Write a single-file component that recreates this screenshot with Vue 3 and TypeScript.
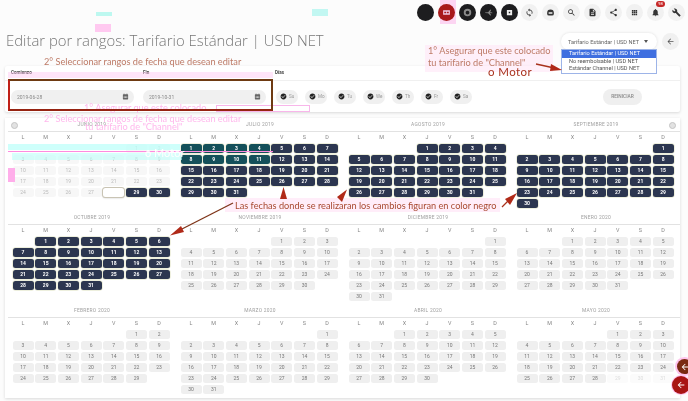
<template>
  <div class="page">
    <div class="toolbar">
      <span
        v-for="(tool, i) in tools"
        :key="i"
        class="tool"
        :class="tool.kind"
      >
        <svg v-if="tool.d" viewBox="0 0 24 24" class="tool-icon">
          <path :d="tool.d" fill-rule="evenodd" />
        </svg>
        <sup v-if="tool.badge" class="tool-badge">{{ tool.badge }}</sup>
      </span>
    </div>

    <div class="head">
      <h1 class="title">Editar por rangos: Tarifario Estándar | USD NET</h1>
      <div class="select">
        Tarifario Estándar | USD NET
        <i class="caret" />
        <ul class="select-list">
          <li class="is-active">Tarifario Estándar | USD NET</li>
          <li>No reembolsable | USD NET</li>
          <li>Estándar Channel | USD NET</li>
        </ul>
      </div>
      <span class="back">
        <svg viewBox="0 0 24 24"><path :d="icons.back" /></svg>
      </span>
    </div>

    <section class="panel">
      <div class="panel-labels">
        <span class="label">Comienzo</span>
        <span class="label">Fin</span>
        <span class="label">Días</span>
      </div>
      <div class="panel-body">
        <div v-for="date in dates" :key="date" class="date-input">
          {{ date }}
          <svg viewBox="0 0 24 24"><path :d="icons.calendar" /></svg>
        </div>
        <div class="chips">
          <span v-for="day in weekChips" :key="day" class="chip">
            <svg viewBox="0 0 24 24"><path :d="icons.check" /></svg>
            {{ day }}
          </span>
        </div>
        <button class="reset">REINICIAR</button>
      </div>
    </section>

    <section class="calendar">
      <span class="gear gear-left" />
      <span class="gear gear-right" />
      <div v-for="month in months" :key="month.name" class="month">
        <div class="month-name">{{ month.name }}</div>
        <div class="month-letters">
          <span v-for="d in weekLetters" :key="d.id" class="letter">{{ d.text }}</span>
        </div>
        <div class="month-grid">
          <span v-for="n in month.offset" :key="'b' + n" />
          <span
            v-for="day in month.days"
            :key="day.n"
            class="day"
            :class="day.cls"
          >{{ day.cls === 'is-start' ? '' : day.n }}</span>
        </div>
      </div>
    </section>

    <!-- artefactos y anotaciones pegadas sobre la captura -->
    <div class="ghost ghost-icon-hl" />
    <div class="ghost ghost-note-a" />
    <div class="ghost ghost-note-b" />
    <div class="ghost ghost-band-a" />
    <div class="ghost ghost-band-b" />
    <div class="ghost ghost-line" />
    <div class="ghost ghost-panel" />
    <div class="ghost ghost-box" />
    <div class="ghost ghost-mark-a" />
    <div class="ghost ghost-mark-b" />
    <div class="ghost ghost-mark-c" />
    <div class="ghost ghost-edge" />
    <span class="ghost-text gt-a">1° Asegurar que este colocado</span>
    <span class="ghost-text gt-b">2° Seleccionar rangos de fecha que desean editar</span>
    <span class="ghost-text gt-c">tu tarifario de "Channel"</span>
    <span class="ghost-text gt-d">o Motor</span>

    <div class="range-box" />
    <span class="note note-range">2° Seleccionar rangos de fecha que desean editar</span>
    <span class="note note-rate">1° Asegurar que este colocado<br />tu tarifario de "Channel"</span>
    <span class="note note-motor">o Motor</span>
    <span class="note note-dates">Las fechas donde se realizaran los cambios figuran en color negro</span>

    <svg class="arrows" viewBox="0 0 688 401">
      <g stroke="#a8321c" stroke-width="1.3" fill="#b02a18">
        <line x1="536" y1="64" x2="552" y2="67.5" />
        <polygon points="562,70 551,64 550,71" stroke="none" />
        <line x1="284" y1="199" x2="284" y2="193" />
        <polygon points="283.5,187 280,199 287,199" stroke="none" />
        <polygon points="347,189.5 337,197 342,202" stroke="none" />
        <line x1="502" y1="207" x2="508" y2="201" />
        <polygon points="517,193 505,199 510,205" stroke="none" />
        <line x1="233" y1="203" x2="180" y2="230" stroke="#7e3418" />
        <polygon points="170,235.5 181,226 184,232" stroke="none" />
      </g>
    </svg>

    <span class="fab fab-top"><svg viewBox="0 0 24 24"><path :d="icons.back" /></svg></span>
    <span class="fab fab-bottom"><svg viewBox="0 0 24 24"><path :d="icons.back" /></svg></span>
  </div>
</template>

<script setup lang="ts">
interface Tool {
  kind: string;
  d?: string;
  badge?: string;
}

const icons = {
  back: 'M20 11H7.83l5.59-5.59L12 4l-8 8 8 8 1.41-1.41L7.83 13H20v-2z',
  calendar:
    'M5 4h14a2 2 0 0 1 2 2v14a2 2 0 0 1-2 2H5a2 2 0 0 1-2-2V6a2 2 0 0 1 2-2zM6 2h2v3H6zM16 2h2v3h-2zM6 10v2h3v-2zM10.5 10v2h3v-2zM15 10v2h3v-2zM6 14v2h3v-2zM10.5 14v2h3v-2zM15 14v2h3v-2z',
  check:
    'M12 2C6.48 2 2 6.48 2 12s4.48 10 10 10 10-4.48 10-10S17.52 2 12 2zm-2 15l-5-5 1.41-1.41L10 14.17l7.59-7.59L19 8l-9 9z',
};

const tools: Tool[] = [
  { kind: 'dark' },
  { kind: 'dark red', d: 'M3 6h18v12H3zM6 10v4h5v-4zM13 10v4h5v-4z' },
  { kind: 'dark soft', d: 'M12 2a10 10 0 1 0 0 20 10 10 0 0 0 0-20zM12 7a5 5 0 1 1 0 10 5 5 0 0 1 0-10z' },
  { kind: 'dark soft', d: 'M3 12l8-1 6-7 2 1-3 6 6 1v2l-6-1 3 6-2 1-6-6-8-1z' },
  { kind: 'dark', d: 'M5 5h14v14H5zM10 10v4h4v-4z' },
  {
    kind: 'light',
    d: 'M12 4V1L8 5l4 4V6c3.31 0 6 2.69 6 6 0 1.01-.25 1.97-.7 2.8l1.46 1.46C19.54 15.03 20 13.57 20 12c0-4.42-3.58-8-8-8zm0 14c-3.31 0-6-2.69-6-6 0-1.01.25-1.97.7-2.8L5.24 7.74C4.46 8.97 4 10.43 4 12c0 4.42 3.58 8 8 8v3l4-4-4-4v3z',
  },
  { kind: 'light', d: 'M3 13a9 9 0 0 1 18 0v2a5 5 0 0 1-5 5H8a5 5 0 0 1-5-5zM7 11v4h10v-4z' },
  {
    kind: 'light',
    d: 'M15.5 14h-.79l-.28-.27C15.41 12.59 16 11.11 16 9.5 16 5.91 13.09 3 9.5 3S3 5.91 3 9.5 5.91 16 9.5 16c1.61 0 3.09-.59 4.23-1.57l.27.28v.79l5 4.99L20.49 19l-4.99-5zm-6 0C7.01 14 5 11.99 5 9.5S7.01 5 9.5 5 14 7.01 14 9.5 11.99 14 9.5 14z',
  },
  {
    kind: 'light',
    d: 'M14 2H6c-1.1 0-2 .9-2 2v16c0 1.1.9 2 2 2h12c1.1 0 2-.9 2-2V8l-6-6zm2 16H8v-2h8v2zm0-4H8v-2h8v2zm-3-5V3.5L18.5 9H13z',
  },
  {
    kind: 'light',
    d: 'M18 16.08c-.76 0-1.44.3-1.96.77L8.91 12.7c.05-.23.09-.46.09-.7s-.04-.47-.09-.7l7.05-4.11c.54.5 1.25.81 2.04.81 1.66 0 3-1.34 3-3s-1.34-3-3-3-3 1.34-3 3c0 .24.04.47.09.7L8.04 9.81C7.5 9.31 6.79 9 6 9c-1.66 0-3 1.34-3 3s1.34 3 3 3c.79 0 1.5-.31 2.04-.81l7.12 4.16c-.05.21-.08.43-.08.65 0 1.61 1.31 2.92 2.92 2.92s2.92-1.31 2.92-2.92-1.31-2.92-2.92-2.92z',
  },
  { kind: 'light', d: 'M5 5h4v4H5zM5 10h4v4H5zM5 15h4v4H5zM10 5h4v4h-4zM10 10h4v4h-4zM10 15h4v4h-4zM15 5h4v4h-4zM15 10h4v4h-4zM15 15h4v4h-4z' },
  {
    kind: 'light',
    badge: '98',
    d: 'M12 22c1.1 0 2-.9 2-2h-4c0 1.1.9 2 2 2zm6-6v-5c0-3.07-1.63-5.64-4.5-6.32V4c0-.83-.67-1.5-1.5-1.5s-1.5.67-1.5 1.5v.68C7.64 5.36 6 7.92 6 11v5l-2 2v1h16v-1l-2-2z',
  },
  {
    kind: 'light',
    d: 'M22.7 19l-9.1-9.1c.9-2.3.4-5-1.5-6.9-2-2-5-2.4-7.4-1.3L9 6 6 9 1.6 4.7C.4 7.1.9 10.1 2.9 12.1c1.9 1.9 4.6 2.4 6.9 1.5l9.1 9.1c.4.4 1 .4 1.4 0l2.3-2.3c.5-.4.5-1.1.1-1.4z',
  },
];

const dates = ['2019-06-28', '2019-10-31'];
const weekChips = ['Su', 'Mo', 'Tu', 'We', 'Th', 'Fr', 'Sa'];
const weekLetters = ['L', 'M', 'X', 'J', 'V', 'S', 'D'].map((text, id) => ({ id, text }));

const names = [
  'ENERO', 'FEBRERO', 'MARZO', 'ABRIL', 'MAYO', 'JUNIO',
  'JULIO', 'AGOSTO', 'SEPTIEMBRE', 'OCTUBRE', 'NOVIEMBRE', 'DICIEMBRE',
];

const rangeStart = new Date(2019, 5, 28).getTime();
const rangeEnd = new Date(2019, 9, 31).getTime();
const lastOpen = new Date(2020, 4, 28).getTime();

function dayClass(y: number, m: number, n: number): string {
  const t = new Date(y, m, n).getTime();
  if (t === rangeStart) return 'is-start';
  if (t < rangeStart) return 'is-past';
  if (t <= rangeEnd) {
    return y === 2019 && m === 6 && (n <= 4 || (n >= 8 && n <= 11)) ? 'is-on is-tint' : 'is-on';
  }
  return t > lastOpen ? 'is-closed' : '';
}

const months = Array.from({ length: 12 }, (_, i) => {
  const y = i < 7 ? 2019 : 2020;
  const m = (i + 5) % 12;
  const total = new Date(y, m + 1, 0).getDate();
  return {
    name: `${names[m]} ${y}`,
    offset: (new Date(y, m, 1).getDay() + 6) % 7,
    days: Array.from({ length: total }, (_, k) => ({ n: k + 1, cls: dayClass(y, m, k + 1) })),
  };
});
</script>

<style scoped>
.page {
  position: relative;
  width: 688px;
  height: 401px;
  overflow: hidden;
  background: #fcfcfc;
  font-family: Roboto, "Liberation Sans", sans-serif;
  filter: blur(0.5px);
}

.toolbar {
  display: flex;
  justify-content: flex-end;
  gap: 3.87px;
  height: 25px;
  padding: 4px 3.5px 0 0;
  box-sizing: border-box;
}

.tool {
  position: relative;
  display: flex;
  align-items: center;
  justify-content: center;
  width: 17px;
  height: 17px;
  border-radius: 50%;
}

.tool.dark {
  background: #1d1d1f;
}

.tool.red {
  background: #a81c1c;
}

.tool.light {
  background: #f1f1f1;
}

.tool-icon {
  width: 9px;
  height: 9px;
  fill: #333;
}

.tool.dark .tool-icon {
  fill: #eee;
}

.tool.soft .tool-icon {
  fill: #8a8a8a;
}

.tool-badge {
  position: absolute;
  top: -3px;
  right: -1px;
  height: 6px;
  padding: 0 2px;
  border-radius: 3px;
  background: #c62828;
  color: #fff;
  font-size: 4px;
  line-height: 6px;
}

.head {
  display: flex;
  align-items: flex-start;
  height: 41px;
  padding: 0 9.5px 0 6px;
}

.title {
  flex: 1;
  margin: 0;
  color: #777;
  font-family: "Open Sans", sans-serif;
  font-size: 14.9px;
  font-weight: 300;
  line-height: 30px;
  white-space: nowrap;
}

.select {
  position: relative;
  display: flex;
  align-items: center;
  gap: 5px;
  width: 96px;
  height: 17px;
  margin-top: 8px;
  padding-left: 7px;
  box-sizing: border-box;
  border-radius: 9px;
  background: #fff;
  box-shadow: 0 0 3px rgba(0, 0, 0, 0.12);
  color: #666;
  font-size: 5.6px;
  white-space: nowrap;
}

.caret {
  border: 2.5px solid transparent;
  border-top: 3px solid #555;
  border-bottom: 0;
}

.select-list {
  position: absolute;
  top: 16px;
  left: 0;
  width: 96px;
  margin: 0;
  padding: 0;
  box-sizing: border-box;
  border: 1px solid #9db4e8;
  background: #fff;
  list-style: none;
}

.select-list li {
  height: 7.6px;
  padding-left: 7px;
  color: #555;
  font-size: 5.6px;
  line-height: 7.6px;
}

.select-list .is-active {
  background: #3f6fe0;
  color: #fff;
}

.back {
  display: flex;
  align-items: center;
  justify-content: center;
  width: 17px;
  height: 17px;
  margin: 8px 0 0 4.5px;
  border-radius: 50%;
  background: #f0f0f0;
}

.back svg {
  width: 9px;
  height: 9px;
  fill: #555;
}

.panel {
  height: 46px;
  margin: 0 8px 0 5px;
  border-radius: 2px;
  background: #fff;
  box-shadow: 0 1px 3px rgba(0, 0, 0, 0.14);
}

.panel-labels {
  display: flex;
  height: 14px;
  padding-left: 6px;
  border-bottom: 1px solid #f0f0f0;
}

.label {
  width: 132px;
  color: #444;
  font-size: 4.6px;
  font-weight: 700;
  line-height: 14px;
}

.panel-body {
  display: flex;
  align-items: center;
  height: 31px;
  padding: 0 38px 0 6px;
}

.date-input {
  display: flex;
  align-items: center;
  justify-content: space-between;
  width: 123px;
  height: 14px;
  margin-right: 9px;
  padding: 0 5px 0 6px;
  box-sizing: border-box;
  border-radius: 7px;
  background: #f0f0f0;
  color: #888;
  font-size: 5px;
}

.date-input svg {
  width: 7px;
  height: 7px;
  fill: #666;
}

.chips {
  display: flex;
  flex: 1;
  gap: 7.5px;
  padding-left: 1px;
}

.chip {
  display: flex;
  align-items: center;
  gap: 2px;
  width: 21.5px;
  height: 14px;
  padding-left: 4px;
  box-sizing: border-box;
  border-radius: 7px;
  background: #f0f0f0;
  color: #999;
  font-size: 4.6px;
}

.chip svg {
  width: 7px;
  height: 7px;
  fill: #222;
}

.reset {
  width: 39px;
  height: 16px;
  padding: 0;
  border: 0;
  border-radius: 8px;
  background: #efefef;
  color: #888;
  font-family: inherit;
  font-size: 4.8px;
  font-weight: 500;
}

.calendar {
  position: relative;
  display: grid;
  grid-template-columns: repeat(4, 168px);
  grid-auto-rows: 93px;
  height: 280px;
  margin: 6px 8px 0 5px;
  padding-left: 3px;
  box-sizing: border-box;
  background: #fff;
  box-shadow: 0 1px 3px rgba(0, 0, 0, 0.14);
}

.gear {
  position: absolute;
  top: 3.5px;
  width: 5px;
  height: 5px;
  border: 1px solid #c4c4c4;
  border-radius: 50%;
  background: #e2e2e2;
}

.gear-left {
  left: 5.5px;
}

.gear-right {
  right: 4.5px;
}

.month {
  padding: 0 3.2px 0 4.5px;
}

.month-name {
  height: 13px;
  margin: 0 -3.2px 0 -4.5px;
  border-bottom: 1px solid #e2e2e2;
  color: #a0a0a0;
  font-size: 4.9px;
  letter-spacing: 0.25px;
  line-height: 13px;
  text-align: center;
}

.month-letters,
.month-grid {
  display: grid;
  grid-template-columns: repeat(7, 21px);
  column-gap: 1.7px;
}

.month-letters {
  height: 11.7px;
}

.month-grid {
  grid-auto-rows: 9px;
  row-gap: 2px;
}

.letter {
  color: #888;
  font-size: 5.4px;
  line-height: 11.7px;
  text-align: center;
}

.day {
  border-radius: 2.5px;
  background: #efefef;
  color: #777;
  font-size: 5px;
  line-height: 9px;
  text-align: center;
}

.day.is-past {
  background: #f7f7f7;
  color: #bbb;
}

.day.is-closed {
  background: #fbfbfb;
  color: #ddd;
}

.day.is-on {
  background: #2c3650;
  box-shadow: 0 0 0 0.7px #e8ead2;
  color: #fff;
  font-weight: 700;
}

.day.is-tint {
  background: #14505a;
}

.day.is-start {
  background: #fff;
  box-shadow: 0 0 0 1px #c9c4b4, 0 1px 2px rgba(0, 0, 0, 0.25);
}

.ghost {
  position: absolute;
  pointer-events: none;
}

.ghost-icon-hl {
  top: 0;
  left: 440px;
  width: 16px;
  height: 24px;
  background: #ffd8f5;
  mix-blend-mode: multiply;
}

.ghost-note-a {
  top: 45px;
  left: 425px;
  width: 128px;
  height: 27px;
  background: rgba(255, 225, 245, 0.5);
}

.ghost-note-b {
  top: 198px;
  left: 225px;
  width: 275px;
  height: 14px;
  background: rgba(255, 225, 245, 0.6);
}

.ghost-band-a {
  top: 144px;
  left: 8px;
  width: 172px;
  height: 6px;
  background: rgba(190, 255, 250, 0.75);
}

.ghost-band-b {
  top: 153px;
  left: 12px;
  width: 170px;
  height: 7px;
  background: rgba(190, 255, 250, 0.6);
}

.ghost-line {
  top: 150.5px;
  left: 8px;
  width: 265px;
  height: 1.5px;
  background: #ff8be0;
}

.ghost-panel {
  top: 72px;
  left: 8px;
  width: 265px;
  height: 6px;
  background: rgba(255, 190, 240, 0.4);
}

.ghost-box {
  top: 105px;
  left: 216px;
  width: 94px;
  height: 7px;
  box-sizing: border-box;
  border: 1px solid #f8b6ea;
}

.ghost-mark-a {
  top: 12px;
  left: 96px;
  width: 16px;
  height: 4px;
  background: #bdf8f0;
}

.ghost-mark-b {
  top: 24px;
  left: 95px;
  width: 16px;
  height: 8px;
  background: #ffc9f0;
}

.ghost-mark-c {
  top: 9px;
  left: 312px;
  width: 16px;
  height: 7px;
  background: #c2f7f2;
}

.ghost-edge {
  top: 168px;
  left: 8px;
  width: 7px;
  height: 14px;
  background: #ffaeea;
}

.ghost-text {
  position: absolute;
  color: #ffb8ec;
  font-family: Lato, sans-serif;
  font-size: 9.2px;
  white-space: nowrap;
}

.gt-a {
  top: 102px;
  left: 84px;
}

.gt-b {
  top: 113px;
  left: 44px;
}

.gt-c {
  top: 121px;
  left: 85px;
}

.gt-d {
  top: 146px;
  left: 145px;
  color: #fff;
  font-size: 11px;
}

.range-box {
  position: absolute;
  top: 79px;
  left: 8px;
  width: 265px;
  height: 32px;
  box-sizing: border-box;
  border: 2px solid #6e3a12;
  border-left-color: #c02018;
  border-bottom-color: #962412;
}

.note {
  position: absolute;
  color: #bd7a66;
  font-family: Lato, sans-serif;
  font-size: 9.2px;
  line-height: 12px;
  white-space: nowrap;
}

.note-range {
  top: 56px;
  left: 44px;
}

.note-rate {
  top: 45px;
  left: 428px;
}

.note-motor {
  top: 66px;
  left: 488px;
  color: #a8321c;
  font-size: 11.5px;
  letter-spacing: 0.4px;
}

.note-dates {
  top: 200px;
  left: 235px;
  color: #a84a30;
}

.arrows {
  position: absolute;
  top: 0;
  left: 0;
  width: 688px;
  height: 401px;
  pointer-events: none;
}

.fab {
  position: absolute;
  display: flex;
  align-items: center;
  justify-content: center;
  border-radius: 50%;
}

.fab svg {
  width: 10px;
  height: 10px;
  fill: #fff;
}

.fab-top {
  top: 359px;
  left: 677px;
  width: 15px;
  height: 15px;
  background: #7a2a12;
  box-shadow: 0 0 0 2px #ffc4ee;
}

.fab-bottom {
  top: 376px;
  left: 672px;
  width: 18px;
  height: 18px;
  background: #a81414;
  box-shadow: 0 0 0 1px #ffc4ee;
}
</style>
